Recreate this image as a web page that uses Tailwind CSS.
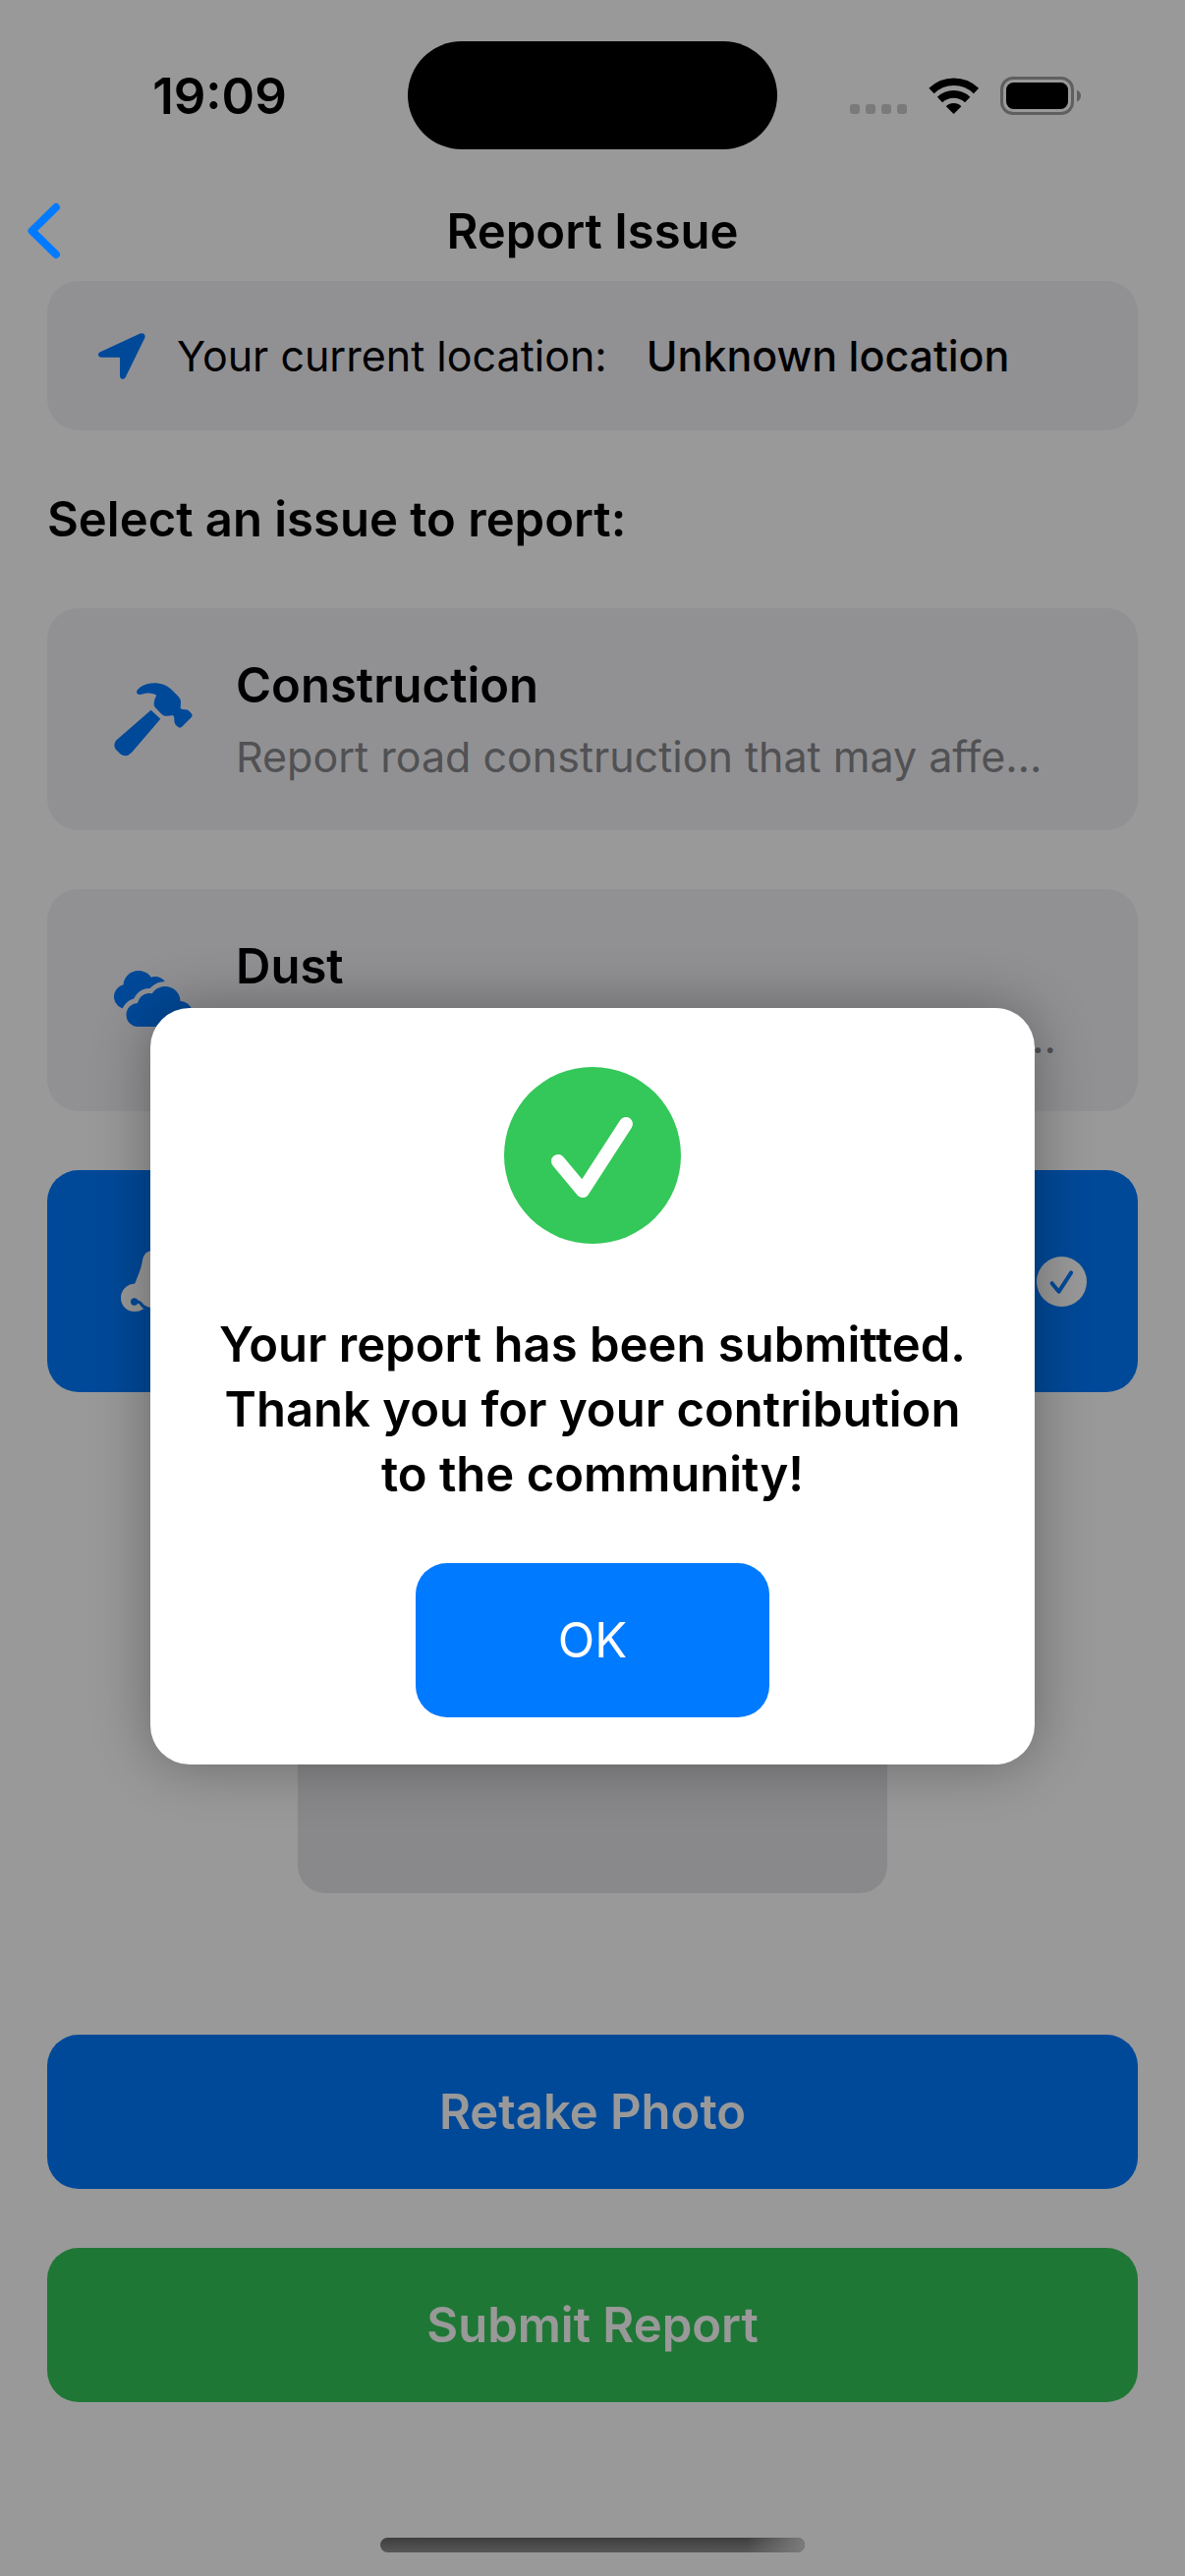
<!DOCTYPE html>
<html lang="en">
<head>
<meta charset="utf-8">
<meta name="viewport" content="width=device-width, initial-scale=1">
<title>Report Issue</title>
<script src="https://cdn.jsdelivr.net/npm/@tailwindcss/browser@4"></script>
</head>
<body class="relative min-h-screen bg-white font-['Inter',sans-serif] text-black">

<!-- Status bar and navigation stay above the dimming layer -->
<header class="relative z-20 pt-[42px]">
  <div class="grid h-[110px] grid-cols-[1fr_376px_1fr] items-center">
    <div class="pl-8 text-center text-[51px] leading-[61px] font-semibold">19:09</div>
    <div class="h-full rounded-full bg-black"></div>
    <div class="flex justify-center pr-8">
      <svg class="h-[40px] w-[236px]" viewBox="865 77 236 40" aria-label="Wi-Fi on, battery full">
        <g fill="#7a7a7a"><rect x="865" y="106" width="10" height="10" rx="3"/><rect x="881" y="106" width="10" height="10" rx="3"/><rect x="897" y="106" width="10" height="10" rx="3"/><rect x="913" y="106" width="10" height="10" rx="3"/></g>
        <g fill="none" stroke="#000" stroke-width="7.6"><path d="M948 92.5 A32.500 32.500 0 0 1 993.500 92.500"/><path d="M956.500 101.500 A20.500 20.500 0 0 1 984.700 101.500"/></g>
        <path d="M970.600 116 L962.800 108.200 A11 11 0 0 1 978.400 108.200 Z"/>
        <rect x="1019.500" y="79.500" width="72" height="36" rx="11.500" fill="none" stroke="#5f5f5f" stroke-width="3"/>
        <rect x="1024" y="84" width="63" height="27" rx="7.500"/>
        <path d="M1096 91.500 Q1100 93.500 1100 97.500 Q1100 101.500 1096 103.500Z" fill="#5f5f5f"/>
      </svg>
    </div>
  </div>
  <nav class="mt-8 grid h-[102px] grid-cols-[100px_1fr_100px] items-center">
    <a href="#" aria-label="Back" class="pl-7">
      <svg class="h-[58px] w-[34px]" viewBox="0 0 34 58" fill="none" stroke="#007aff" stroke-width="8" stroke-linecap="round" stroke-linejoin="round"><path d="M29 5 L4.500 29 L29 53"/></svg>
    </a>
    <h1 class="text-center text-[49px] leading-[61px] font-semibold">Report Issue</h1>
  </nav>
</header>

<main class="flex flex-col gap-[60px] px-12">
  <section class="flex h-[152px] items-center rounded-[32px] bg-[#f2f2f7] pr-12 pl-[52px] text-[43px] leading-[54px]">
    <svg class="h-[47px] w-[48px] shrink-0" viewBox="0 0 48 47" fill="#007aff"><path d="M42.500 .6 C46 -.8 48.600 1.500 47.200 5.200 L28 44.500 C26.500 48 22 47.500 22 43.500 L22 25.500 Q22 24.800 21.300 24.800 L3.200 24.700 C-.8 24.700 -1 20.500 2 19.200 Z"/></svg>
    <span class="ml-8">Your current location:</span>
    <span class="ml-10 font-medium">Unknown location</span>
  </section>

  <h2 class="text-[49px] leading-[61px] font-semibold">Select an issue to report:</h2>

  <button type="button" class="flex items-center gap-6 rounded-[32px] bg-[#f2f2f7] p-12 text-left">
    <span class="flex w-[120px] shrink-0 justify-center">
      <svg class="h-[75px] w-[80px]" viewBox="80 107 240 225" fill="#007aff"><path d="M193 190 L222 217 L134 320 Q116 338 99 324 L86 311 Q76 298 86 283 Z"/><path d="M149 134 C152 122 176 108 202 108 C226 108 243 116 256 128 L277 149 Q284 157 284 166 L283 185 Q288 189 296 189 Q303 188 308 192 L316 200 Q322 207 316 213 L289 240 Q281 248 273 240 L267 234 Q263 228 264 216 Q264 209 259 206 Q250 209 236 208 Q231 208 226 203 L206 183 Q201 177 202 170 C203 160 206 151 210 146 C205 139 190 137 176 139 Q166 141 160 143 Q150 144 149 134Z"/></svg>
    </span>
    <span class="flex min-w-0 flex-1 flex-col gap-[15px]">
      <span class="text-[49px] leading-[61px] font-semibold">Construction</span>
      <span class="text-[43px] leading-[54px] whitespace-nowrap text-[#87878a]">Report road construction that may affe…</span>
    </span>
  </button>

  <button type="button" class="flex items-center gap-6 rounded-[32px] bg-[#f2f2f7] p-12 text-left">
    <span class="flex w-[120px] shrink-0 justify-center">
      <svg class="h-[60px] w-[80px]" viewBox="116 988 80 60" fill="#007aff">
        <circle cx="128.500" cy="1014.500" r="12.500"/><circle cx="141" cy="1003.500" r="15.500"/><circle cx="158" cy="1006" r="12"/><path d="M128 1027 V1002 H160 V1020Z"/>
        <g stroke="#f2f2f7" stroke-width="10"><circle cx="140.500" cy="1033" r="12"/><circle cx="152" cy="1023" r="12"/><circle cx="168" cy="1019.500" r="15.500"/><circle cx="183" cy="1032" r="13"/></g>
        <circle cx="140.500" cy="1033" r="12"/><circle cx="152" cy="1023" r="12"/><circle cx="168" cy="1019.500" r="15.500"/><circle cx="183" cy="1032" r="13"/><path d="M140 1020 H183 V1045 H140Z"/>
      </svg>
    </span>
    <span class="flex min-w-0 flex-1 flex-col gap-[15px]">
      <span class="text-[49px] leading-[61px] font-semibold">Dust</span>
      <span class="text-[43px] leading-[54px] whitespace-nowrap text-[#87878a]">Report areas with excessive dust levels…</span>
    </span>
  </button>

  <button type="button" aria-pressed="true" aria-label="Odor" class="flex min-h-[226px] items-center justify-between rounded-[32px] bg-[#007aff] p-12 text-white">
    <span class="flex w-[120px] shrink-0 justify-center">
      <svg class="h-[62px] w-[66px]" viewBox="0 0 66 62" fill="#fff"><path d="M33 0 C26 0 23 4 22 10 C21 18 17 26 14.300 33.500 C6 34 0 40 0 48 C0 56 6 62 14 62 C18 62 20 61.500 22 59.600 L33 58.500 L44 59.600 C46 61.500 48 62 52 62 C60 62 66 56 66 48 C66 40 60 34 51.700 33.500 C49 26 45 18 44 10 C43 4 40 0 33 0Z"/><g fill="none" stroke="#007aff" stroke-width="3"><path d="M14 52 Q19 51 22 56 Q26 59.500 32 60"/><path d="M52 52 Q47 51 44 56 Q40 59.500 34 60"/></g><circle cx="13.700" cy="52" r="3.700" fill="#007aff"/><circle cx="52.300" cy="52" r="3.700" fill="#007aff"/></svg>
    </span>
    <svg class="mr-1 size-[51px] shrink-0" viewBox="0 0 180 180"><circle cx="90" cy="90" r="90" fill="#fff"/><path d="M55 96 L80 126 L124 58" fill="none" stroke="#007aff" stroke-width="14" stroke-linecap="round" stroke-linejoin="round"/></svg>
  </button>

  <div class="h-[450px] w-[600px] max-w-full self-center rounded-[28px] bg-[#e5e5ea]"></div>

  <div class="mt-[84px] flex flex-col gap-[60px] text-[49px] leading-[61px] font-semibold text-white">
    <button type="button" class="rounded-[32px] bg-[#007aff] py-12">Retake Photo</button>
    <button type="button" class="rounded-[32px] bg-[#34c759] py-12">Submit Report</button>
  </div>
</main>

<!-- Confirmation dialog -->
<div class="absolute inset-0 z-10 flex items-center justify-center bg-black/40 px-12 pt-[200px]">
  <div role="dialog" aria-modal="true" aria-labelledby="message" class="flex w-[900px] flex-col items-center rounded-[40px] bg-white px-12 pt-[60px] pb-12 shadow-[0_0_60px_rgba(0,0,0,0.33)]">
    <svg class="size-[180px]" viewBox="0 0 180 180"><circle cx="90" cy="90" r="90" fill="#34c759"/><path d="M55 96 L80 126 L124 58" fill="none" stroke="#fff" stroke-width="14" stroke-linecap="round" stroke-linejoin="round"/></svg>
    <p id="message" class="mt-[70px] text-center text-[49px] leading-[66px] font-semibold">Your report has been submitted.<br>Thank you for your contribution<br>to the community!</p>
    <button type="button" class="mt-[57px] w-[360px] rounded-[32px] bg-[#007aff] py-12 text-[49px] leading-[61px] text-white">OK</button>
  </div>
</div>

<div class="absolute inset-x-0 bottom-6 z-20 flex justify-center">
  <div class="h-[15px] w-[432px] overflow-hidden rounded-full bg-linear-to-b from-[#3e3e3e] to-[#575757]">
    <div class="ml-auto h-full w-[60px] bg-linear-to-r from-transparent to-[#7c7c7c]"></div>
  </div>
</div>
</body>
</html>
